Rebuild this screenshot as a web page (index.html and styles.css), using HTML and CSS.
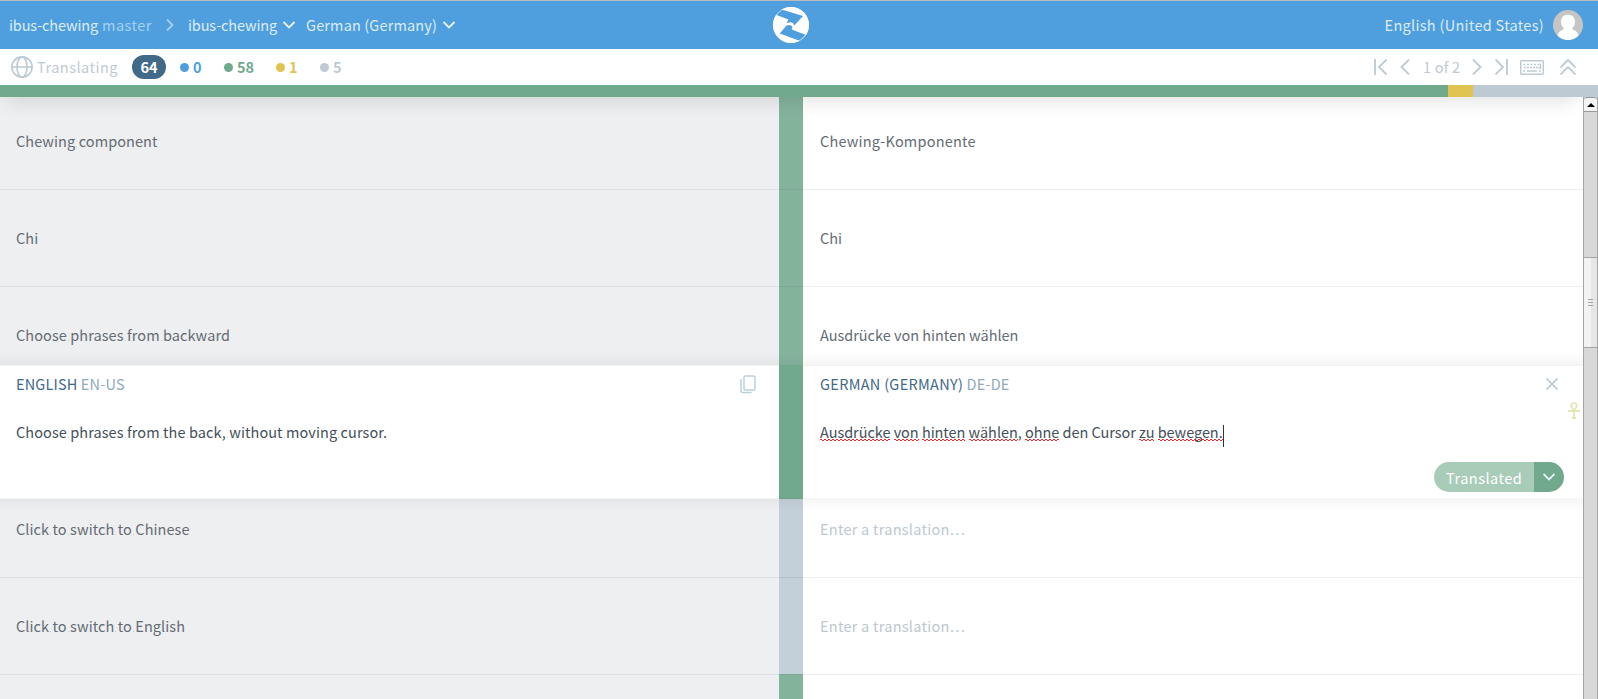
FILE: index.html
```
<!DOCTYPE html>
<html lang="en">
<head>
<meta charset="utf-8">
<title>ibus-chewing</title>
<link rel="stylesheet" href="styles.css">
</head>
<body>
<div class="app">
  <header class="topbar">
    <nav class="crumbs">
      <span class="project">ibus-chewing</span>
      <span class="version">master</span>
      <svg class="crumb-sep" width="8" height="14" viewBox="0 0 8 14"><path d="M1 1.500 6.500 7 1 12.500"/></svg>
      <span class="document">ibus-chewing</span>
      <svg class="chev doc-chev" width="14" height="8" viewBox="0 0 14 8"><path d="M1.500 1 7 6.500 12.500 1"/></svg>
      <span class="locale">German (Germany)</span>
      <svg class="chev" width="14" height="8" viewBox="0 0 14 8"><path d="M1.500 1 7 6.500 12.500 1"/></svg>
    </nav>
    <svg class="logo" width="36" height="36" viewBox="0 0 36 36">
      <circle cx="18" cy="18" r="18" fill="#fff"/>
      <path d="M7 2 30 9 21.300 18.500 20 16 17.500 15.200 13.500 16 15.500 12.500 2.800 7.800Z" fill="#4f9fde"/>
      <path d="M13.800 18.200 17.800 18.200 19.400 19.800 18.800 22.600 33 28 27.200 34 6.700 26.500Z" fill="#4f9fde"/>
      <circle cx="18" cy="18" r="17.600" fill="none" stroke="#fff" stroke-width=".6"/>
    </svg>
    <div class="account">
      <span class="ui-lang">English (United States)</span>
      <svg class="avatar" width="30" height="30" viewBox="0 0 30 30">
        <circle cx="15" cy="15" r="15" fill="#c5c5c5"/>
        <path d="M15 4.800c4.200 0 7 2.700 7 6.700 0 3.200-1.300 5.700-3 7l1.500 1.500c2.500.8 4.300 2.400 5 5.700A15 15 0 0 1 4.500 25.700c.7-3.300 2.500-4.900 5-5.700L11 18.500c-1.700-1.300-3-3.800-3-7 0-4 2.800-6.700 7-6.700Z" fill="#fff"/>
      </svg>
    </div>
  </header>

  <div class="toolbar">
    <svg class="line-icon globe" width="22" height="22" viewBox="0 0 22 22"><circle cx="11" cy="11" r="10.100"/><ellipse cx="11" cy="11" rx="5" ry="10.100"/><path d="M1 11h20"/></svg>
    <span class="mode">Translating</span>
    <span class="total">64</span>
    <span class="stat stat-blue"><i></i>0</span>
    <span class="stat stat-green"><i></i>58</span>
    <span class="stat stat-yellow"><i></i>1</span>
    <span class="stat stat-gray"><i></i>5</span>
    <div class="pager">
      <svg class="line-icon" width="14" height="16" viewBox="0 0 14 16"><path d="M1 0v16M12.500.5 5 8l7.500 7.500"/></svg>
      <svg class="line-icon prev" width="10" height="16" viewBox="0 0 10 16"><path d="M9 .5 1.500 8 9 15.500"/></svg>
      <span class="pages">1 of 2</span>
      <svg class="line-icon" width="10" height="16" viewBox="0 0 10 16"><path d="M1 .5 8.500 8 1 15.500"/></svg>
      <svg class="line-icon last" width="14" height="16" viewBox="0 0 14 16"><path d="M13 0v16M1.500.5 9 8 1.500 15.500"/></svg>
      <svg class="line-icon keyboard" width="24" height="15" viewBox="0 0 24 15"><rect x=".7" y=".7" width="22.600" height="13.600" rx="1"/><path d="M3.500 4.500h16" stroke-dasharray="2 1.500"/><path d="M4 7.500h14" stroke-dasharray="2 1"/><path d="M20.500 3.500v4.500h-2M3 11h2M7 11h10M19 11h2"/></svg>
      <svg class="line-icon collapse" width="16" height="16" viewBox="0 0 16 16"><path d="M.5 8.500 8 1l7.500 7.500M.5 15.500 8 8l7.500 7.500"/></svg>
    </div>
  </div>

  <div class="progress"><span class="p-green"></span><span class="p-yellow"></span><span class="p-gray"></span></div>

  <div class="workspace">
    <main class="rows">
      <section class="row first">
        <p class="source">Chewing<b></b>component</p><div class="status"></div><p class="target komponente">Chewing-Komponente</p>
      </section>
      <section class="row">
        <p class="source">Chi</p><div class="status"></div><p class="target">Chi</p>
      </section>
      <section class="row before">
        <p class="source">Choose<b></b>phrases<b></b>from<b></b>backward</p><div class="status"></div><p class="target">Ausdrücke von hinten wählen</p>
      </section>
      <section class="row active">
        <div class="pane">
          <div class="pane-head">
            <span><span class="lang">ENGLISH</span> <span class="code">EN-US</span></span>
            <svg class="copy" width="16" height="19" viewBox="0 0 16 19"><rect x="4" y="1" width="11" height="14" rx="1.500"/><path d="M1 4v12q0 1.600 1.600 1.600H11.500"/></svg>
          </div>
          <p class="text">Choose<b></b>phrases<b></b>from<b></b>the<b></b>back,<b></b>without<b></b>moving<b></b>cursor.</p>
        </div>
        <div class="status"></div>
        <div class="pane pane-target">
          <div class="pane-head">
            <span><span class="lang lang-de">GERMAN (GERMANY)</span> <span class="code">DE-DE</span></span>
            <svg class="line-icon close" width="12" height="12" viewBox="0 0 12 12"><path d="M.5.500l11 11M11.500.5l-11 11"/></svg>
          </div>
          <p class="text german"><u>Ausdrücke</u> <u>von</u> <u>hinten</u> <u>wählen</u>, <u>ohne</u> den Cursor <u>zu</u> <u>bewegen.</u><span class="caret"></span></p>
          <div class="save"><span class="save-label">Translated</span><span class="save-menu"><svg class="chev" width="12" height="8" viewBox="0 0 12 8"><path d="M.5 1 6 6.500 11.500 1"/></svg></span></div>
          <svg class="ankh" width="12" height="17" viewBox="0 0 12 17"><path d="M6 8.500C3.500 5.500 2.800 4.200 3.200 2.800 4 .3 8 .3 8.800 2.800 9.200 4.200 8.500 5.500 6 8.500ZM0 9h12M6 8.500V16M4 16h4"/></svg>
        </div>
      </section>
      <section class="row untranslated after">
        <p class="source">Click<b></b>to<b></b>switch<b></b>to<b></b>Chinese</p><div class="status"></div><p class="target">Enter a translation…</p>
      </section>
      <section class="row untranslated closing">
        <p class="source">Click<b></b>to<b></b>switch<b></b>to<b></b>English</p><div class="status"></div><p class="target">Enter a translation…</p>
      </section>
      <section class="row last-row"><p class="source"></p><div class="status"></div><p class="target"></p></section>
    </main>
    <div class="scrollbar">
      <div class="arrow"><svg width="8" height="4" viewBox="0 0 8 4"><path d="M0 4 4 0 8 4Z"/></svg></div>
      <div class="track"></div>
      <div class="thumb"><i></i><i></i><i></i></div>
      <div class="track-end"></div>
    </div>
  </div>
</div>
</body>
</html>
```
FILE: styles.css
```
* { box-sizing: border-box; }
body {
  margin: 0;
  font: 14.5px/24px "Noto Sans CJK SC", "Open Sans", sans-serif;
  color: #454f59;
  background: #fff;
  overflow: hidden;
}
p { margin: 0; }
svg { display: block; flex: none; }
span { white-space: pre; }
.app { display: flex; flex-direction: column; height: 699px; }

.topbar {
  flex: none;
  display: grid;
  grid-template-columns: 773px 36px 1fr;
  align-items: center;
  height: 49px;
  border-top: 1px solid #bbb;
  background: #4f9fde;
  color: #dcecf9;
}
.crumbs { display: flex; align-items: center; padding-left: 9px; }
.project, .document { width: 90px; letter-spacing: -.13px; }
.version { margin-left: 3px; width: 60px; letter-spacing: .5px; color: #a7cff0; }
.crumb-sep { margin: 0 13px 0 4px; fill: none; stroke: #a7cff0; stroke-width: 1.800; }
.chev { fill: none; stroke: #e6f2fb; stroke-width: 1.800; }
.document { margin-left: 1px; width: 89px; }
.doc-chev { margin: 0 10px 0 5px; }
.locale { width: 136px; letter-spacing: .14px; }
.account { display: flex; align-items: center; justify-content: flex-end; padding-right: 15px; gap: 9px; }
.ui-lang { letter-spacing: .3px; }

.toolbar { flex: none; display: flex; align-items: center; height: 36px; padding-left: 11px; color: #bdcad4; }
.line-icon { fill: none; stroke: #bdcad4; stroke-width: 1.800; }
.globe { stroke-width: 1.600; }
.mode { margin-left: 4px; width: 95px; letter-spacing: .5px; }
.total {
  width: 34px; height: 24px; border-radius: 12px;
  background: #416988; color: #fff; font-weight: 700; text-align: center;
}
.stat { display: flex; align-items: center; gap: 5px; width: 44px; font-weight: 700; }
.stat i { width: 9px; height: 9px; border-radius: 50%; background: currentColor; }
.stat-blue { margin-left: 14px; gap: 4px; color: #4f9fde; }
.stat-green { width: 52px; gap: 4px; letter-spacing: -.1px; color: #70a98b; }
.stat-yellow { gap: 4px; color: #e0c350; }
.stat-gray { gap: 4px; color: #bdcad4; }
.pager { display: flex; align-items: center; margin-left: auto; padding-right: 22px; }
.prev { margin-left: 12px; }
.pages { margin: 0 12px 0 13px; width: 37px; letter-spacing: .2px; }
.last { margin-left: 12px; }
.keyboard { margin: 0 16px 0 12px; stroke-width: 1.400; }

.progress { flex: none; display: flex; height: 12px; }
.p-green { width: 1448px; background: #70a98b; }
.p-yellow { width: 25px; background: #e0c350; }
.p-gray { flex: 1; background: #bdcad4; }

.workspace { display: flex; flex: 1; min-height: 0; }
.rows { flex: 1; position: relative; min-width: 0; }
.rows::before {
  content: ""; position: absolute; inset: 0 0 auto; height: 20px; z-index: 1;
  background: linear-gradient(rgba(0,0,0,.08), rgba(0,0,0,.03) 45%, transparent);
  mask-image: linear-gradient(90deg, rgba(0,0,0,.3), #000 20px, #000 calc(100% - 20px), rgba(0,0,0,.2));
}
.row {
  position: relative;
  display: grid; grid-template-columns: 779px 24px 1fr;
  height: 97px;
  letter-spacing: .07px;
}
.row::after { content: ""; position: absolute; inset: auto 0 0; height: 1px; background: rgba(60,80,100,.09); }
.source, .target { padding-top: 36px; }
.source { padding-left: 16px; background: #eeeff1; color: #646c74; }
.target { padding-left: 17px; color: #646c74; letter-spacing: -.02px; }
.komponente { letter-spacing: .2px; }
.status { background: #84b39c; }
.untranslated .status { background: #c3cfd9; }
.untranslated .target { color: #bdc8d1; letter-spacing: .26px; }
.first { height: 93px; }
.first p { padding-top: 32px; }
.before { height: 78px; }
.before::after { height: 13px; background: linear-gradient(transparent, rgba(0,0,0,.04)); }
.before p { padding-top: 36px; }
.after { height: 79px; }
.after p { padding-top: 18px; }
.after::before {
  content: ""; position: absolute; inset: -1px 0 auto; height: 13px;
  background: linear-gradient(rgba(0,0,0,.04), transparent);
}
.closing { height: 96px; }
.closing::after { bottom: -1px; z-index: 1; }
.last-row { height: 25px; }
.last-row::after { display: none; }
.source b, .text b {
  display: inline-block; width: 3.400px; height: 14px; vertical-align: baseline;
  background: linear-gradient(#b5cfe0, #b5cfe0) 1px 100% / 1px 1px no-repeat;
}

.active { height: 134px; }
.active::after { display: none; }
.active .status { background: #70a98b; }
.pane { position: relative; padding: 7px 23px 0 16px; }
.pane::before {
  content: ""; position: absolute; inset: 0 0 auto; height: 1px; background: #f1f1f2;
}
.pane-target { padding: 7px 23px 0 17px; }
.pane-head { display: flex; align-items: center; justify-content: space-between; height: 24px; }
.lang { color: #416988; letter-spacing: .16px; }
.lang-de { letter-spacing: .3px; }
.code { color: #8fa9be; letter-spacing: .2px; }
.copy { fill: none; stroke: #bdcfdc; stroke-width: 1.500; }
.close { margin-right: 2px; stroke: #b9cbd8; stroke-width: 1.600; }
.text { margin-top: 24px; white-space: nowrap; }
.german { letter-spacing: -.045px; }
.german u {
  text-decoration: none;
  padding-bottom: 1px;
  background:
    linear-gradient(90deg, #f22 50%, transparent 50%) 0 calc(100% - 3px) / 4px 1px repeat-x,
    linear-gradient(90deg, transparent 50%, #f22 50%) 0 calc(100% - 2px) / 4px 1px repeat-x;
}
.caret { display: inline-block; width: 1px; height: 22px; margin: -6px 0 -5px; vertical-align: -4px; background: #333; }
.save { display: flex; width: 130px; height: 30px; margin: 18px -4px 0 auto; border-radius: 15px; overflow: hidden; }
.save-label { width: 100px; padding: 4px 0 0 12px; background: #a9ccb9; color: #fff; letter-spacing: .5px; }
.save-menu { flex: 1; display: flex; align-items: center; justify-content: center; background: #70a98b; }
.ankh { position: absolute; right: 3px; top: 37px; fill: none; stroke: #e4e6b4; stroke-width: 1.800; }

.scrollbar { display: flex; flex-direction: column; width: 15px; background: #d8d8d8; border: solid #a5a5a5; border-width: 0 1px; }
.arrow { display: flex; align-items: center; justify-content: center; height: 15px; border: 1px solid #999; border-width: 1px 0; border-radius: 3px 3px 0 0; background: #f4f4f4; }
.track { height: 145px; }
.thumb {
  display: flex; flex-direction: column; align-items: center; justify-content: center; gap: 2px;
  height: 91px; border: 1px solid #a5a5a5; border-width: 1px 0;
  background: linear-gradient(90deg, #f3f3f3 55%, #e6e6e6 55%);
}
.thumb i { width: 5px; height: 1px; background: #a5a5a5; }
.track-end { flex: 1; }
```
